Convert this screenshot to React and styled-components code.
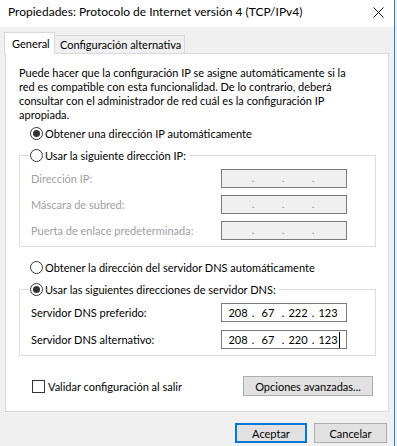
import React from "react";
import styled, { createGlobalStyle } from "styled-components";

const GlobalStyle = createGlobalStyle`
  html, body {
    margin: 0;
    padding: 0;
    background: #e9eef3;
  }
  body {
    font-family: Lato, "Liberation Sans", Arial, sans-serif;
    font-size: 11px;
    color: #000;
  }
`;

const ipFields = [
  { label: "Dirección IP:" },
  { label: "Máscara de subred:" },
  { label: "Puerta de enlace predeterminada:" },
];

const dnsFields = [
  { label: "Servidor DNS preferido:", value: ["208", "67", "222", "123"] },
  { label: "Servidor DNS alternativo:", value: ["208", "67", "220", "123"], caret: true },
];

const IpBox = ({ value = ["", "", "", ""], disabled, caret }) => (
  <StIpBox $disabled={disabled}>
    {value.map((part, i) => (
      <React.Fragment key={i}>
        {i > 0 && <StIpDot $disabled={disabled}>.</StIpDot>}
        <StIpPart>
          {part}
          {caret && i === 3 && <StCaret />}
        </StIpPart>
      </React.Fragment>
    ))}
  </StIpBox>
);

const App = () => {
  return (
    <>
      <GlobalStyle />
      <StWindow>
        <StTitleBar>
          <StTitle>Propiedades: Protocolo de Internet versión 4 (TCP/IPv4)</StTitle>
          <StClose>
            <svg width="11" height="11" viewBox="0 0 11 11">
              <path d="M0.5 0.5 L10.5 10.5 M10.5 0.5 L0.5 10.5" stroke="#111" strokeWidth="1" />
            </svg>
          </StClose>
        </StTitleBar>

        <StBody>
          <StTabStrip>
            <StTab $active>General</StTab>
            <StTab>Configuración alternativa</StTab>
          </StTabStrip>

          <StPanel>
            <StText>
              Puede hacer que la configuración IP se asigne automáticamente si la<br />
              red es compatible con esta funcionalidad. De lo contrario, deberá<br />
              consultar con el administrador de red cuál es la configuración IP<br />
              apropiada.
            </StText>

            <StRadioRow $top={3}>
              <StRadio $checked />
              Obtener una dirección IP automáticamente
            </StRadioRow>

            <StGroup $top={6}>
              <StLegend>
                <StRadio />
                Usar la siguiente dirección IP:
              </StLegend>
              <StFieldRows $gap={7}>
                {ipFields.map((f) => (
                  <StFieldRow key={f.label}>
                    <StFieldLabel $disabled>{f.label}</StFieldLabel>
                    <IpBox disabled />
                  </StFieldRow>
                ))}
              </StFieldRows>
            </StGroup>

            <StRadioRow $top={12}>
              <StRadio />
              Obtener la dirección del servidor DNS automáticamente
            </StRadioRow>

            <StGroup $top={6}>
              <StLegend>
                <StRadio $checked />
                Usar las siguientes direcciones de servidor DNS:
              </StLegend>
              <StFieldRows $gap={8}>
                {dnsFields.map((f) => (
                  <StFieldRow key={f.label}>
                    <StFieldLabel>{f.label}</StFieldLabel>
                    <IpBox value={f.value} caret={f.caret} />
                  </StFieldRow>
                ))}
              </StFieldRows>
            </StGroup>

            <StOptionsRow>
              <StCheckLabel>
                <StCheckbox />
                Validar configuración al salir
              </StCheckLabel>
              <StButton $width={130}>Opciones avanzadas...</StButton>
            </StOptionsRow>
          </StPanel>

          <StFooter>
            <StButton $width={72} $default>Aceptar</StButton>
            <StButton $width={73}>Cancelar</StButton>
          </StFooter>
        </StBody>
      </StWindow>
    </>
  );
};

export default App;

const StWindow = styled.div`
  width: 394px;
  height: 446px;
  background: #f0f0f0;
  border-right: 1px solid #2b7fd0;
  display: flex;
  flex-direction: column;
  overflow: hidden;
`;

const StTitleBar = styled.div`
  height: 27px;
  flex-shrink: 0;
  background: #fff;
  display: flex;
  align-items: flex-start;
  justify-content: space-between;
  padding: 5px 8px 0 8px;
  box-sizing: border-box;
`;

const StTitle = styled.div`
  font-size: 12px;
  line-height: 14px;
  white-space: nowrap;
`;

const StClose = styled.div`
  width: 11px;
  height: 11px;
  margin-top: 2px;
  margin-right: 2px;
  display: flex;
`;

const StBody = styled.div`
  flex: 1;
  padding: 5px 0 0 5px;
  display: flex;
  flex-direction: column;
`;

const StTabStrip = styled.div`
  display: flex;
  align-items: flex-end;
  margin-left: -1px;
  height: 21px;
`;

const StTab = styled.div`
  box-sizing: border-box;
  border: 1px solid #d9d9d9;
  border-bottom: none;
  white-space: nowrap;
  line-height: 14px;
  background: ${(p) => (p.$active ? "#fff" : "#f0f0f0")};
  height: ${(p) => (p.$active ? "22px" : "18px")};
  width: ${(p) => (p.$active ? "51px" : "130px")};
  padding: ${(p) => (p.$active ? "4px 0 0 7px" : "2px 0 0 5px")};
  margin-bottom: ${(p) => (p.$active ? "-1px" : "0")};
  border-left: ${(p) => (p.$active ? "1px solid #d9d9d9" : "none")};
  position: relative;
  z-index: ${(p) => (p.$active ? 1 : 0)};
`;

const StPanel = styled.div`
  box-sizing: border-box;
  width: 384px;
  height: 359px;
  background: #fff;
  border: 1px solid #d9d9d9;
  padding: 12px 12px 13px 13px;
  display: flex;
  flex-direction: column;
`;

const StText = styled.p`
  margin: 0;
  line-height: 14px;
  white-space: nowrap;
`;

const StRadioRow = styled.div`
  display: flex;
  align-items: center;
  gap: 2px;
  height: 16px;
  padding-left: 11px;
  margin-top: ${(p) => p.$top}px;
  white-space: nowrap;
`;

const StRadio = styled.span`
  box-sizing: border-box;
  width: 13px;
  height: 13px;
  flex-shrink: 0;
  border: 1px solid #333;
  border-radius: 50%;
  background: #fff;
  display: flex;
  align-items: center;
  justify-content: center;

  &::after {
    content: "";
    width: 7px;
    height: 7px;
    border-radius: 50%;
    background: #333;
    display: ${(p) => (p.$checked ? "block" : "none")};
  }
`;

const StGroup = styled.fieldset`
  margin: ${(p) => p.$top}px 0 0 0;
  padding: 0 0 6px 9px;
  border: 1px solid #dcdcdc;
  min-width: 0;
`;

const StLegend = styled.legend`
  display: flex;
  align-items: center;
  gap: 2px;
  height: 16px;
  padding: 0 3px 0 1px;
  white-space: nowrap;
`;

const StFieldRows = styled.div`
  display: flex;
  flex-direction: column;
  gap: ${(p) => p.$gap}px;
  margin-top: 6px;
  padding-left: 2px;
`;

const StFieldRow = styled.div`
  display: grid;
  grid-template-columns: 190px 126px;
  align-items: center;
  height: 19px;
`;

const StFieldLabel = styled.span`
  color: ${(p) => (p.$disabled ? "#a0a0a0" : "#000")};
  white-space: nowrap;
`;

const StIpBox = styled.div`
  box-sizing: border-box;
  height: 19px;
  border: 1px solid #7a7a7a;
  background: ${(p) => (p.$disabled ? "#f0f0f0" : "#fff")};
  display: flex;
  align-items: center;
  padding-left: 3px;
  line-height: 14px;
`;

const StIpPart = styled.span`
  width: 26px;
  text-align: center;
  position: relative;
`;

const StIpDot = styled.span`
  width: 4px;
  text-align: center;
  color: ${(p) => (p.$disabled ? "#6d6d6d" : "#000")};
  font-size: ${(p) => (p.$disabled ? "9px" : "11px")};
`;

const StCaret = styled.span`
  position: absolute;
  right: 1px;
  top: -1px;
  width: 1px;
  height: 16px;
  background: #000;
`;

const StOptionsRow = styled.div`
  display: flex;
  align-items: center;
  justify-content: space-between;
  margin-top: 20px;
  padding: 0 3px 0 13px;
`;

const StCheckLabel = styled.div`
  display: flex;
  align-items: center;
  gap: 3px;
  white-space: nowrap;
`;

const StCheckbox = styled.span`
  box-sizing: border-box;
  width: 13px;
  height: 13px;
  border: 1px solid #333;
  background: #fff;
`;

const StButton = styled.button`
  box-sizing: border-box;
  width: ${(p) => p.$width}px;
  height: 20px;
  padding: 0;
  font-family: inherit;
  font-size: 11px;
  color: #000;
  background: #e1e1e1;
  border: ${(p) => (p.$default ? "2px solid #0078d7" : "1px solid #adadad")};
  white-space: nowrap;
`;

const StFooter = styled.div`
  display: flex;
  justify-content: flex-end;
  gap: 7px;
  margin-top: 11px;
  padding-right: 7px;
`;
